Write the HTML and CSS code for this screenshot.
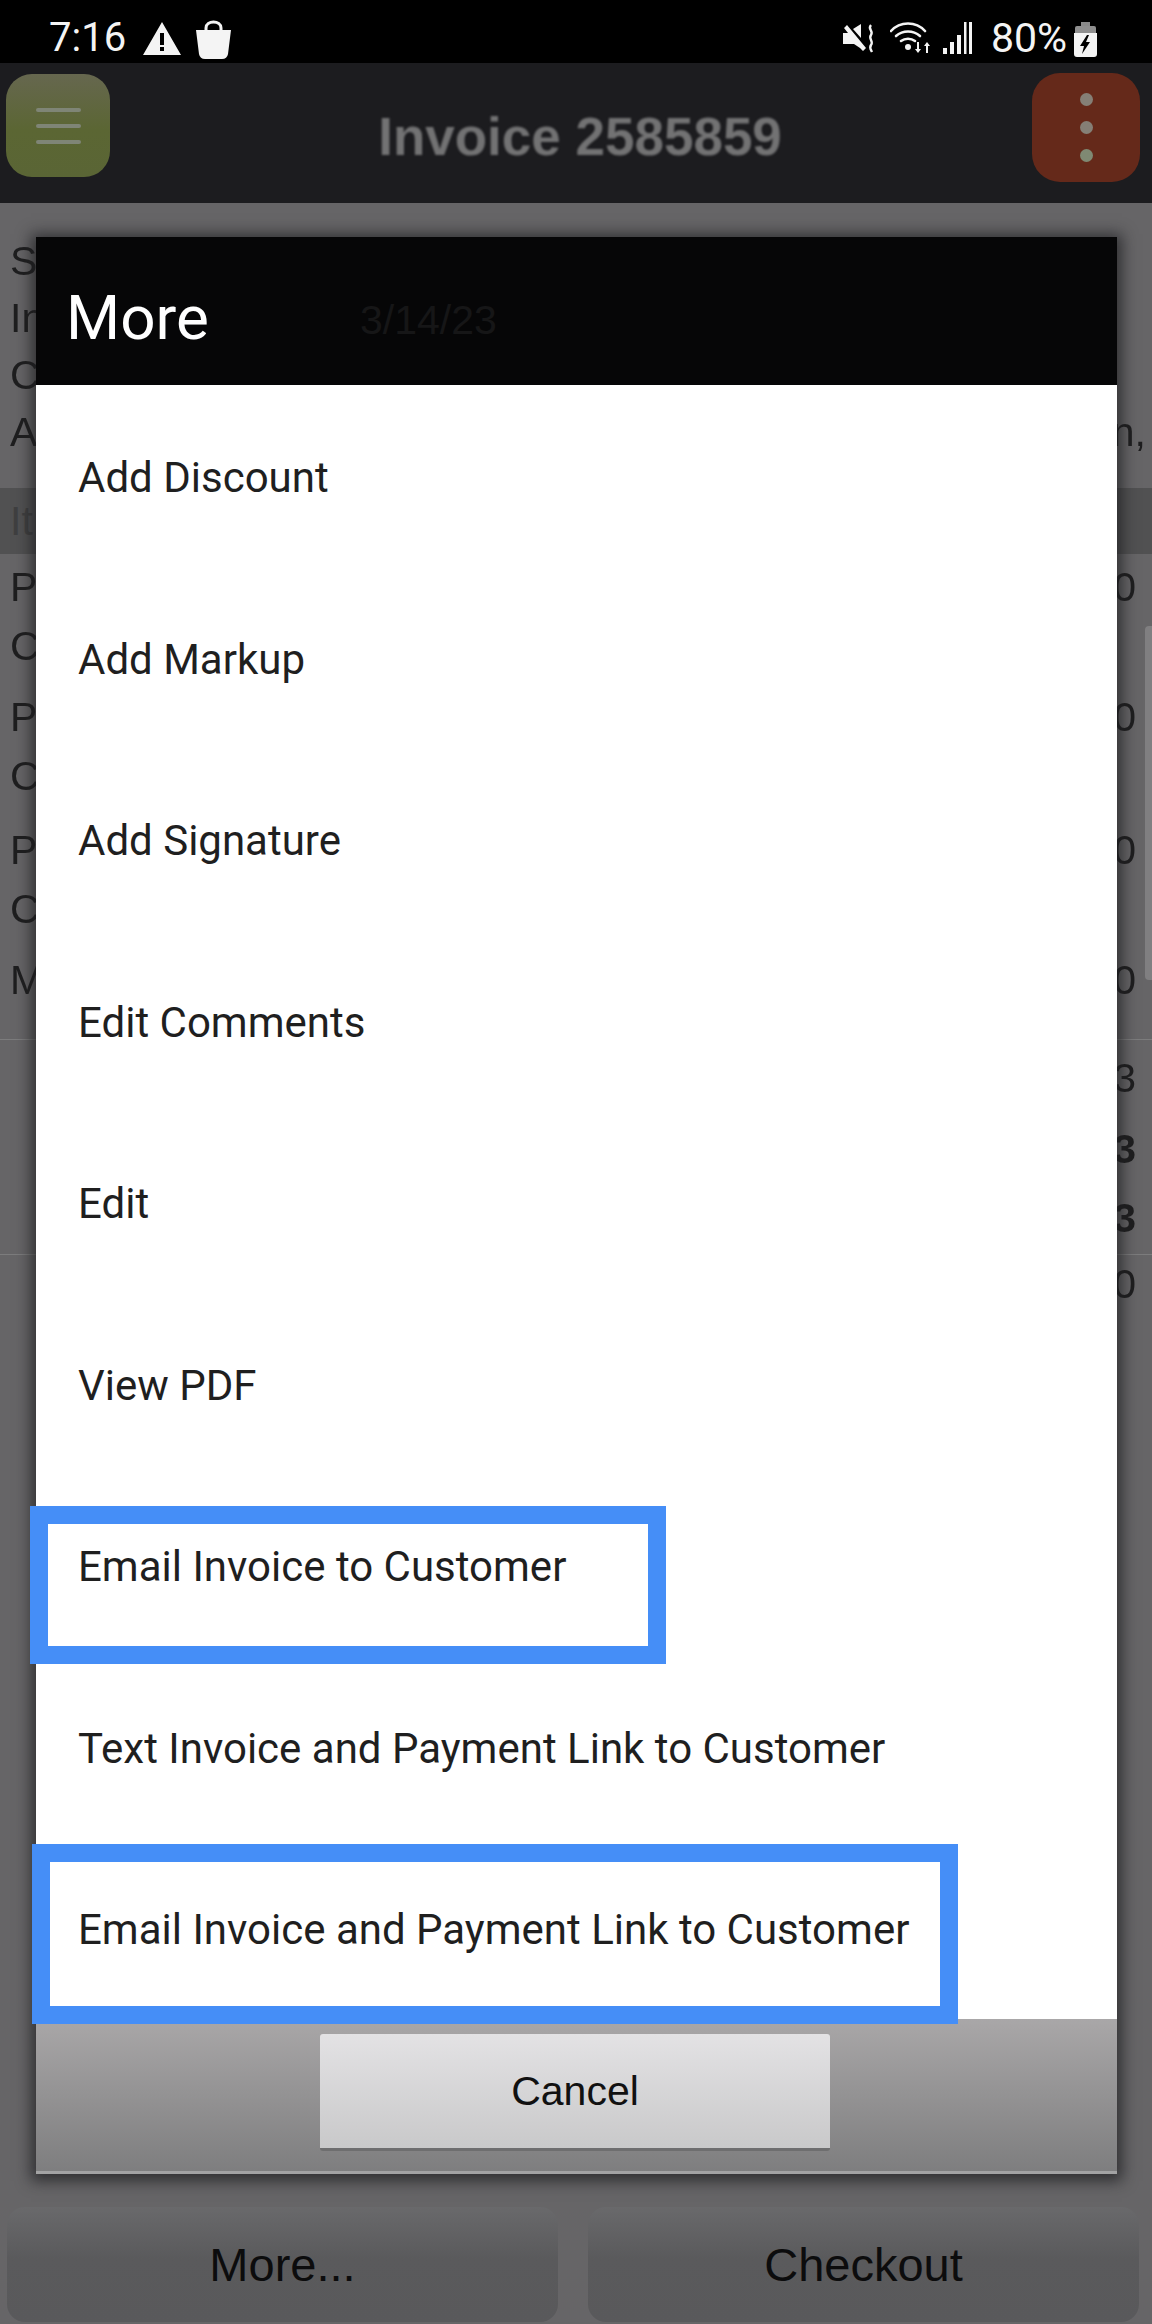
FILE: index.html
```html
<!DOCTYPE html>
<html lang="en">
<head>
<meta charset="utf-8">
<title>Invoice 2585859</title>
<link rel="stylesheet" href="styles.css">
</head>
<body>
<div class="screen">
  <header class="status">
    <div class="status-left">
      <span class="clock">7:16</span>
      <svg class="ic-warn" viewBox="0 0 38 33"><path fill="#f4f4f4" fill-rule="evenodd" d="M19 0 38 33H0ZM17 11v12h4V11ZM17 25v4h4v-4Z"/></svg>
      <svg class="ic-bag" viewBox="0 0 35 39"><path fill="none" stroke="#f4f4f4" stroke-width="3" d="M10 12V8c0-8 15-8 15 0v4"/><path fill="#f4f4f4" d="M0 10h35l-3 24q-1 5-6 5H9q-5 0-6-5Z"/></svg>
    </div>
    <div class="status-right">
      <svg class="ic-mute" viewBox="0 0 33 31"><path fill="#f4f4f4" d="M1 10h5L2 5l3-3 19 23-3 3-3-3-6-4H1ZM11 6l8-5v14Z"/><path fill="none" stroke="#f4f4f4" stroke-width="2.4" d="M29 2c-4 4 3 6 0 10-3 4 3 6 0 10-2 3 0 5 1 7"/></svg>
      <svg class="ic-wifi" viewBox="0 0 42 31"><g fill="none" stroke="#f4f4f4" stroke-width="2.6" stroke-linecap="round"><path d="M1 9C10-1 26-1 35 9"/><path d="M6 14c7-6 17-6 24 0"/><path d="M11 19c4-3 10-3 14 0"/></g><circle cx="18" cy="25" r="3" fill="#f4f4f4"/><path fill="#f4f4f4" d="M27 20h2v7h2l-3 4-3-4h2ZM36 31h2v-7h2l-3-4-3 4h2Z"/></svg>
      <svg class="ic-signal" viewBox="0 0 30 32"><g fill="#f4f4f4"><rect x="0" y="26" width="4" height="6"/><rect x="7" y="20" width="4" height="12"/><rect x="14" y="13" width="4" height="19"/><rect x="21" y="0" width="2.5" height="32"/><rect x="26" y="0" width="3" height="32"/></g></svg>
      <span class="battery-text">80%</span>
      <svg class="ic-batt" viewBox="0 0 25 35"><path fill="#8a8a8a" d="M8 0h9v5h-9Z"/><path fill="#8f8f8f" d="M2 6q0-2 2-2h17q2 0 2 2v5H2Z"/><path fill="#f4f4f4" fill-rule="evenodd" d="M1 11h23v21q0 3-3 3H4q-3 0-3-3ZM14 13 7 24h4l-2 8 8-12h-4l3-7Z"/></svg>
    </div>
  </header>

  <nav class="appbar">
    <button class="menu-btn" type="button" aria-label="Menu">
      <span class="bar"></span><span class="bar"></span><span class="bar"></span>
    </button>
    <h1 class="app-title">Invoice 2585859</h1>
    <button class="kebab-btn" type="button" aria-label="Options">
      <span class="dot"></span><span class="dot"></span><span class="dot dot-green"></span>
    </button>
  </nav>

  <main class="content">
    <section class="summary">
      <div class="row"><span>S</span></div>
      <div class="row"><span>In</span></div>
      <div class="row"><span>C</span></div>
      <div class="row"><span>A</span><span class="val-wide">n,</span></div>
    </section>
    <div class="band"><span>It</span></div>
    <section class="group g1">
      <div class="row tall"><span>P</span><span class="val">0</span></div>
      <div class="row tall"><span>C</span></div>
    </section>
    <section class="group g2">
      <div class="row tall"><span>P</span><span class="val">0</span></div>
      <div class="row tall"><span>C</span></div>
    </section>
    <section class="group g3">
      <div class="row tall"><span>P</span><span class="val">0</span></div>
      <div class="row tall"><span>C</span></div>
    </section>
    <section class="group g2">
      <div class="row tall"><span>M</span><span class="val">0</span></div>
    </section>
    <section class="totals">
      <div class="row tall"><span class="val">3</span></div>
      <div class="row tall strong"><span class="val">3</span></div>
      <div class="row tall strong"><span class="val">3</span></div>
    </section>
    <section class="paid">
      <div class="row tall"><span class="val">0</span></div>
    </section>
    <div class="scrollbar"></div>
  </main>

  <footer class="actions">
    <button class="action" type="button">More...</button>
    <button class="action" type="button">Checkout</button>
  </footer>

  <div class="dialog">
    <div class="dialog-title">
      <span>More</span>
      <span class="ghost ghost-date">3/14/23</span>
    </div>
    <ul class="menu">
      <li>Add Discount</li>
      <li>Add Markup</li>
      <li>Add Signature</li>
      <li>Edit Comments</li>
      <li>Edit</li>
      <li>View PDF</li>
      <li>Email Invoice to Customer</li>
      <li>Text Invoice and Payment Link to Customer</li>
      <li>Email Invoice and Payment Link to Customer</li>
    </ul>
    <div class="dialog-foot">
      <button class="cancel" type="button">Cancel</button>
    </div>
  </div>

  <div class="mark mark-one"></div>
  <div class="mark mark-two"></div>
</div>
</body>
</html>
```

FILE: styles.css
```css
* { box-sizing: border-box; }
html, body { margin: 0; padding: 0; }
body { width: 1152px; height: 2324px; overflow: hidden; background: #666; font-family: "Liberation Sans", Arial, sans-serif; }

.screen { position: relative; width: 1152px; height: 2324px; display: flex; flex-direction: column; background: #666567; overflow: hidden; }

/* status bar */
.status { height: 63px; flex: none; background: #000; display: flex; justify-content: space-between; align-items: flex-start; color: #f4f4f4; }
.status-left { display: flex; align-items: flex-start; padding: 16px 0 0 49px; }
.clock { font: 400 40px/44px Roboto, sans-serif; width: 94px; }
.ic-warn { width: 38px; height: 33px; margin-top: 6px; }
.ic-bag { width: 35px; height: 39px; margin: 4px 0 0 15px; }
.status-right { display: flex; align-items: flex-start; padding: 16px 54px 0 0; }
.ic-mute { width: 33px; height: 31px; margin-top: 7px; }
.ic-wifi { width: 42px; height: 31px; margin: 6px 0 0 15px; }
.ic-signal { width: 30px; height: 32px; margin: 6px 0 0 11px; }
.battery-text { font: 400 41px/44px Roboto, sans-serif; margin-left: 18px; width: 82px; }
.ic-batt { width: 25px; height: 35px; margin-top: 6px; }

/* app bar */
.appbar { height: 140px; flex: none; background: #1c1c1f; display: flex; justify-content: space-between; align-items: flex-start; padding: 10px 12px 0 6px; }
.menu-btn { width: 104px; height: 103px; margin-top: 1px; border: 0; border-radius: 26px; padding: 0; background: linear-gradient(#66674f, #5b6633 55%, #5a6535); display: flex; flex-direction: column; align-items: center; justify-content: center; gap: 12px; }
.bar { width: 45px; height: 4px; background: #7f8576; border-radius: 2px; }
.app-title { margin: 34px 0 0 18px; font: 700 53px/60px "Liberation Sans", sans-serif; color: #727273; filter: blur(.9px); }
.kebab-btn { width: 108px; height: 109px; border: 0; border-radius: 28px; padding: 0; background: #65291a; display: flex; flex-direction: column; align-items: center; justify-content: center; gap: 15px; }
.dot { width: 13px; height: 13px; border-radius: 50%; background: #857f76; }
.dot-green { background: #7f8973; }

/* content under the dialog */
.content { position: relative; flex: 1; padding-top: 30px; font-size: 41px; color: #1e1e1f; }
.row { height: 57px; display: flex; justify-content: space-between; align-items: center; padding-left: 10px; }
.row.tall { height: 59px; }
.row span { filter: blur(.5px); }
.strong { font-weight: 700; }
.val { margin-left: auto; padding-right: 16px; }
.val-wide { padding-right: 6px; }
.band { height: 66px; margin-top: 27px; display: flex; align-items: center; padding-left: 10px; background: #515152; color: #3f3f40; }
.group.g1 { margin-top: 3.5px; }
.group.g2 { margin-top: 12px; }
.group.g3 { margin-top: 15px; }
.totals { margin-top: 29px; border-top: 1px solid #7c7c7d; padding-top: 9px; }
.totals .row:nth-child(2) { margin-top: 12px; }
.totals .row:nth-child(3) { margin-top: 10px; }
.paid { margin-top: 6px; border-top: 1px solid #7c7c7d; }
.scrollbar { position: absolute; right: 0; top: 423px; width: 7px; height: 354px; border-radius: 4px 0 0 4px; background: #807f81; }

/* bottom buttons */
.actions { flex: none; height: 117px; display: flex; gap: 30px; padding: 0 13px 2px 7px; }
.action { flex: 1; border: 0; border-radius: 18px; background: linear-gradient(#69696b, #5a5a5c 45%, #59595b); font: 400 47px/1 "Liberation Sans", sans-serif; color: #0c0c0d; padding: 0; }

/* dialog */
.dialog { position: absolute; left: 36px; top: 237px; width: 1081px; height: 1937px; display: flex; flex-direction: column; box-shadow: 0 2px 14px 5px rgba(30, 30, 32, .75); }
.dialog-title { position: relative; flex: none; height: 148px; background: #060607; color: #fff; font: 400 62px/70px Roboto, sans-serif; padding: 46px 0 0 30px; }
.ghost { position: absolute; font: 400 41px/48px "Liberation Sans", sans-serif; color: #161617; }
.ghost-date { left: 324px; top: 59px; }
.menu { flex: 1; margin: 0; padding: 2px 0 0; list-style: none; background: #fff; overflow: hidden; font: 400 42px/181.5px Roboto, sans-serif; color: #1f1f1f; }
.menu li { height: 181.5px; padding-left: 42px; white-space: nowrap; }
.dialog-foot { flex: none; height: 155px; background: linear-gradient(#a9a7a8, #7e7e7f); border-bottom: 3px solid #a3a3a4; display: flex; justify-content: center; padding: 15px 3px 0 0; }
.cancel { width: 510px; height: 117px; border: 0; border-bottom: 3px solid #6e6e6f; border-radius: 3px; background: linear-gradient(#e3e2e4, #c9c9ca); font: 400 41px/1 "Liberation Sans", sans-serif; color: #111; padding: 0; }

/* annotation boxes */
.mark { position: absolute; border: solid #458ef7; border-width: 18px; }
.mark-one { left: 30px; top: 1506px; width: 636px; height: 158px; }
.mark-two { left: 32px; top: 1844px; width: 926px; height: 180px; }
```
